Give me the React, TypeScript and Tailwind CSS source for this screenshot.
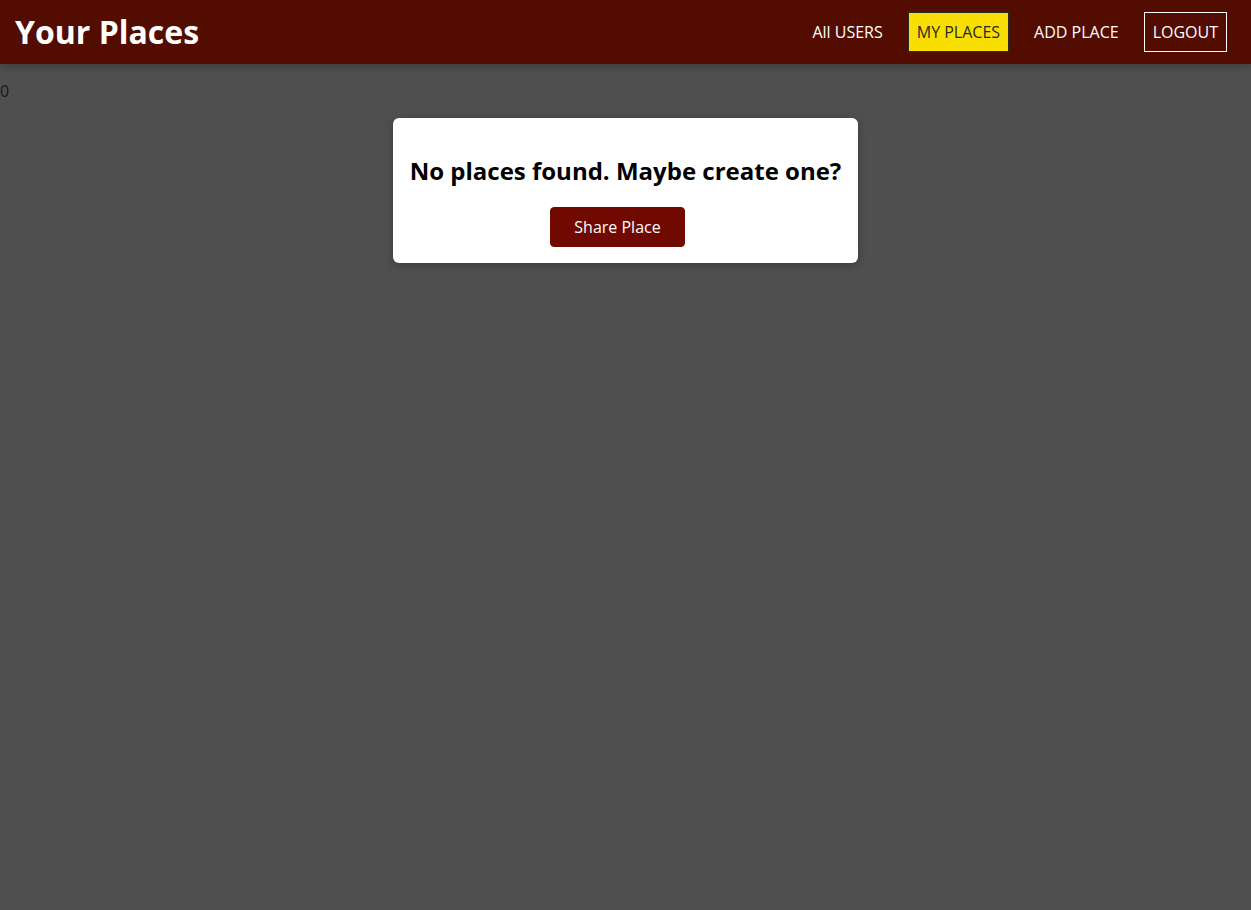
export default function App() {
  const links = [
    { label: 'All USERS', active: false, outlined: false },
    { label: 'MY PLACES', active: true, outlined: false },
    { label: 'ADD PLACE', active: false, outlined: false },
    { label: 'LOGOUT', active: false, outlined: true },
  ];

  return (
    <div className="min-h-[910px] bg-[#4f4f4f] font-['Open_Sans',sans-serif]">
      <header className="h-16 bg-[#530c00] shadow-[0_2px_8px_rgba(0,0,0,0.26)] flex items-center justify-between pl-[15px] pr-6">
        <h1 className="text-[32px] font-bold text-white leading-none">Your Places</h1>
        <nav>
          <ul className="flex items-center gap-4">
            {links.map(link => (
              <li key={link.label}>
                <a
                  className={`block px-2 py-2 border text-[16px] leading-[22px] ${
                    link.active
                      ? 'bg-[#f8df00] border-[#292929] text-[#292929]'
                      : link.outlined
                      ? 'border-white text-white'
                      : 'border-transparent text-white'
                  }`}
                >
                  {link.label}
                </a>
              </li>
            ))}
          </ul>
        </nav>
      </header>

      <main className="pt-4">
        <p className="text-[16px] leading-[22px] text-[#1a1a1a]">0</p>

        {/* Empty state card */}
        <div className="mt-4 mx-auto w-[465px] bg-white rounded-md shadow-[0_2px_8px_rgba(0,0,0,0.26)] p-4 text-center">
          <h2 className="mt-5 mb-5 text-[24px] leading-[33px] font-bold text-black">
            No places found. Maybe create one?
          </h2>
          <button className="mr-4 inline-block bg-[#700a00] text-white text-[16px] leading-[22px] px-[23.5px] py-2 border border-[#700a00] rounded">
            Share Place
          </button>
        </div>
      </main>
    </div>
  );
}
